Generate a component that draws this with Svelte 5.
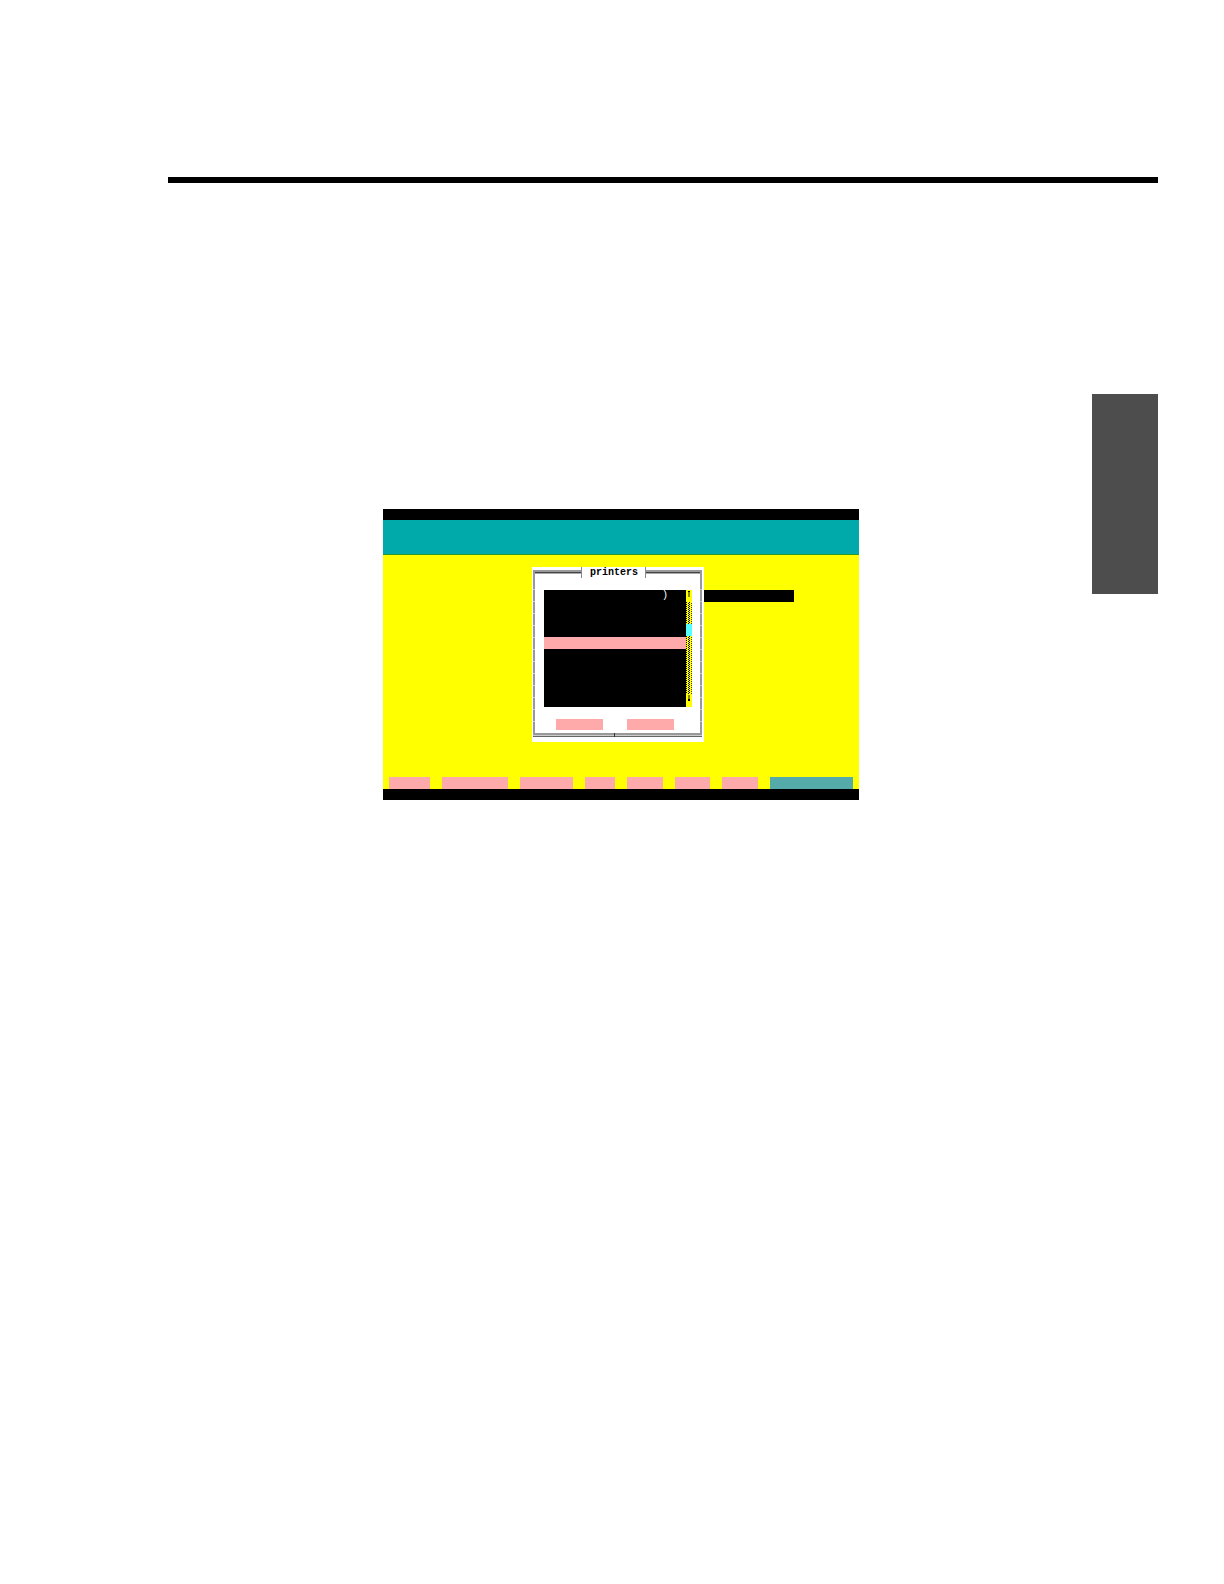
<script>
  const rows = [')', '', '', '', '', '', '', '', '', ''];
  const functionKeys = [41, 66, 53, 30, 36, 35, 36];

  let selected = $state(4);
</script>

<main class="page">
  <hr class="rule" />

  <div class="content">
    <section class="screen" aria-label="Printer selection">
      <div class="strip"></div>
      <header class="banner"></header>

      <div class="workspace">
        <div class="dialog" role="dialog" aria-labelledby="dialog-title">
          <div class="dialog-head">
            <span class="line left"></span>
            <h2 id="dialog-title">printers</h2>
            <span class="line right"></span>
          </div>

          <div class="dialog-body">
            <div class="picker">
              <ul class="list">
                {#each rows as row, index}
                  <li>
                    <button
                      class="row"
                      class:selected={selected === index}
                      aria-label={'Printer ' + (index + 1)}
                      onclick={() => (selected = index)}
                    >{row}</button>
                  </li>
                {/each}
              </ul>
              <svg class="scroll" viewBox="0 0 6 117" shape-rendering="crispEdges" aria-hidden="true">
                <defs>
                  <pattern id="dither" width="6" height="2" patternUnits="userSpaceOnUse">
                    <rect width="1" height="1" />
                    <rect x="3" width="1" height="1" />
                    <rect x="2" y="1" width="1" height="1" />
                    <rect x="5" y="1" width="1" height="1" fill="#440" />
                  </pattern>
                </defs>
                <rect width="6" height="117" fill="#ff0" />
                <rect y="12" width="6" height="92" fill="url(#dither)" />
                <rect y="34" width="6" height="12" fill="#5ff" />
                <path d="M2 1h2v6h-2z" fill="#880" />
                <path d="M2 1h2v1h-2z" />
                <path d="M2 105h2v6h-2z" fill="#880" />
                <path d="M2 109h2v2h-2z" />
              </svg>
            </div>

            <div class="actions">
              <button class="action" aria-label="OK"></button>
              <button class="action" aria-label="Cancel"></button>
            </div>
          </div>

          <div class="dialog-foot"><span></span></div>
        </div>

        <input class="field" type="text" aria-label="Printer" />
      </div>

      <nav class="keys" aria-label="Function keys">
        {#each functionKeys as width, index}
          <button class="key" style="width: {width}px" aria-label={'F' + (index + 1)}></button>
        {/each}
        <button class="key help" aria-label="Help"></button>
      </nav>
      <div class="strip"></div>
    </section>

    <aside class="tab"></aside>
  </div>
</main>

<style>
  :global(body) {
    margin: 0;
    background: #fff;
  }

  .page {
    box-sizing: border-box;
    min-height: 100vh;
    padding: 177px 66px 0 168px;
    font-family: 'Liberation Mono', 'Courier New', monospace;
    font-size: 10px;
  }

  button,
  input {
    box-sizing: border-box;
    margin: 0;
    padding: 0;
    border: 0;
    border-radius: 0;
    font: inherit;
  }

  .rule {
    height: 6px;
    margin: 0;
    border: 0;
    background: #000;
  }

  .content {
    display: flex;
    align-items: flex-start;
    justify-content: space-between;
  }

  .screen {
    flex: 0 0 476px;
    margin: 326px 0 0 215px;
    background: #ff0;
  }

  .strip {
    height: 11px;
    background: #000;
  }

  .banner {
    height: 34px;
    background: #0aa;
    border-bottom: 1px solid #2a9a2a;
  }

  .workspace {
    display: flex;
    align-items: flex-start;
    padding: 12px 0 35px 149px;
  }

  .dialog {
    box-sizing: border-box;
    width: 172px;
    padding: 0 2px 5px 1px;
    background: #fff;
  }

  .dialog-head {
    display: flex;
    height: 11px;
  }

  .line {
    flex: 1;
    margin-top: 3px;
    background: linear-gradient(#999 2px, #444 2px 3px, #aaa 3px 4px, #fff 4px);
  }

  .line.left {
    flex: 0 0 46px;
    border-left: 2px solid #999;
  }

  .line.right {
    border-right: 2px solid #999;
  }

  h2 {
    margin: 0;
    padding: 0 7px 0 8px;
    border: solid #888;
    border-width: 0 1px;
    font-size: 10px;
    font-weight: bold;
    line-height: 11px;
  }

  .dialog-body {
    padding: 12px 8px 3px 9px;
    border: solid #999;
    border-width: 0 2px;
    border-image: repeating-linear-gradient(#999 0 11px, #ccc 11px 12px) 0 2;
  }

  .picker {
    display: flex;
    height: 117px;
  }

  .list {
    display: flex;
    flex: 1;
    flex-direction: column;
    margin: 0;
    padding: 0;
    list-style: none;
    background: #000;
  }

  .list li {
    display: flex;
    flex: 1;
    min-height: 0;
  }

  .row {
    width: 100%;
    padding-right: 18px;
    background: #000;
    color: #fff;
    line-height: 11px;
    text-align: right;
  }

  .row.selected {
    background: #faa;
  }

  .scroll {
    display: block;
    width: 6px;
    height: 117px;
  }

  .actions {
    display: flex;
    gap: 24px;
    padding: 12px 0 0 12px;
  }

  .action {
    width: 47px;
    height: 11px;
    background: #faa;
  }

  .dialog-foot {
    display: flex;
    height: 4px;
    padding-left: 81px;
    background: linear-gradient(#999 2px, #ccc 2px 3px, #666 3px);
  }

  .dialog-foot span {
    width: 1px;
    background: #333;
  }

  .field {
    width: 90px;
    height: 12px;
    margin-top: 23px;
    background: #000;
    color: #fff;
  }

  .keys {
    display: flex;
    gap: 12px;
    padding: 0 6px;
  }

  .key {
    height: 12px;
    background: #faa;
  }

  .key.help {
    flex: 1;
    background: #5aa;
  }

  .tab {
    flex: 0 0 66px;
    height: 200px;
    margin-top: 211px;
    background: #4d4d4d;
  }
</style>
